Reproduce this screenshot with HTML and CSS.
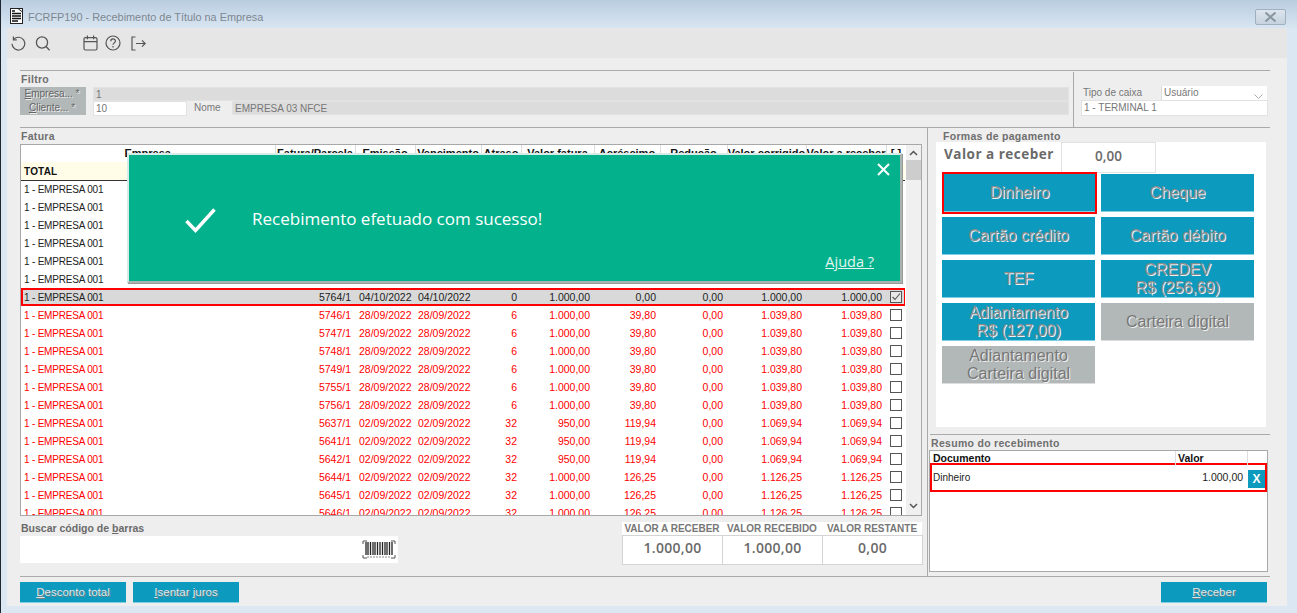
FILE: index.html
```html
<!DOCTYPE html>
<html lang="pt-BR">
<head>
<meta charset="utf-8">
<title>FCRFP190 - Recebimento de Título na Empresa</title>
<link rel="stylesheet" href="styles.css">
</head>
<body>
<div class="window">
  <header class="titlebar">
    <svg class="doc-icon" width="13" height="16" viewBox="0 0 13 16"><rect x=".5" y=".5" width="12" height="15" fill="#fff" stroke="#222"/><path d="M2 3h3M2 5.5h9M2 8h9M2 10.5h9M2 13h6" stroke="#111" stroke-width="1.4"/><path d="M8 .5l4.5 3.5" stroke="#222"/></svg>
    <span class="title-text">FCRFP190 - Recebimento de Título na Empresa</span>
    <button class="win-close"><svg width="13" height="10" viewBox="0 0 13 10"><path d="M1.500 .5l10 9M11.500 .5l-10 9" stroke="#87959f" stroke-width="2" fill="none"/></svg></button>
  </header>
  <div class="client">
    <nav class="toolbar">
      <svg class="tool" width="17" height="17" viewBox="0 0 17 17" fill="none" stroke="#555" stroke-width="1.2"><path d="M3.6 4.4A6.4 6.4 0 1 1 2 8.8"/><path d="M3.4 1.4v3.4h3.4"/></svg>
      <svg class="tool tool-search" width="16" height="17" viewBox="0 0 16 17" fill="none" stroke="#555" stroke-width="1.3"><circle cx="7" cy="7.5" r="5.6"/><path d="M11 11.5l3.6 3.8"/></svg>
      <svg class="tool tool-cal" width="15" height="16" viewBox="0 0 15 16" fill="none" stroke="#555" stroke-width="1.2"><rect x="1" y="2.6" width="13" height="12.4" rx="1.5"/><path d="M1 6.6h13M4.4 .6v3.6M10.6 .6v3.6"/></svg>
      <svg class="tool tool-help" width="16" height="16" viewBox="0 0 16 16" fill="none" stroke="#555" stroke-width="1.2"><circle cx="8" cy="8" r="7"/><path d="M5.8 6.2c0-3 4.6-3 4.6-.1 0 1.800-2.400 1.800-2.400 3.700M8 11v1.400"/></svg>
      <svg class="tool tool-exit" width="15" height="15" viewBox="0 0 15 15" fill="none" stroke="#555" stroke-width="1.2"><path d="M4.500 1H1v13h3.500M5 7.500h9M11 4.400l3.200 3.100-3.200 3.100"/></svg>
    </nav>
    <main class="content">
      <section class="filter">
        <div class="filter-left">
          <div class="legend">Filtro</div>
          <div class="f-row">
            <span class="f-label"><u>E</u>mpresa... *</span>
            <span class="f-input f-disabled f-grow">1</span>
          </div>
          <div class="f-row">
            <span class="f-label"><u>C</u>liente... *</span>
            <span class="f-input f-client">10</span>
            <span class="f-caption">Nome</span>
            <span class="f-input f-disabled f-grow">EMPRESA 03 NFCE</span>
          </div>
        </div>
        <div class="filter-right">
          <div class="caixa-row">
            <span class="caixa-label">Tipo de caixa</span>
            <span class="caixa-select">Usuário
              <svg width="9" height="5" viewBox="0 0 9 5"><path d="M.5.500l4 4 4-4" fill="none" stroke="#aaa"/></svg>
            </span>
          </div>
          <div class="caixa-field">1 - TERMINAL 1</div>
        </div>
      </section>
      <section class="body">
        <div class="left">
          <div class="legend legend-fatura">Fatura</div>
          <div class="grid-frame">
            <div class="grid-clip">
              <table class="grid">
                <colgroup>
                  <col class="c-emp"><col class="c-fat"><col class="c-emi"><col class="c-ven"><col class="c-atr"><col class="c-vf"><col class="c-acr"><col class="c-red"><col class="c-cor"><col class="c-rec"><col class="c-chk">
                </colgroup>
                <thead>
                  <tr><th class="h-emp">Empresa</th><th>Fatura/Parcela</th><th>Emissão</th><th>Vencimento</th><th>Atraso</th><th>Valor fatura</th><th>Acréscimo</th><th>Redução</th><th>Valor corrigido</th><th>Valor a receber</th><th>[ ]</th></tr>
                </thead>
                <tbody>
                  <tr class="total"><td colspan="11">TOTAL</td></tr>
                  <tr><td colspan="11">1 - EMPRESA 001</td></tr>
                  <tr><td colspan="11">1 - EMPRESA 001</td></tr>
                  <tr><td colspan="11">1 - EMPRESA 001</td></tr>
                  <tr><td colspan="11">1 - EMPRESA 001</td></tr>
                  <tr><td colspan="11">1 - EMPRESA 001</td></tr>
                  <tr><td colspan="11">1 - EMPRESA 001</td></tr>
                  <tr class="selected"><td>1 - EMPRESA 001</td><td class="n">5764/1</td><td class="d">04/10/2022</td><td class="d">04/10/2022</td><td class="n">0</td><td class="n">1.000,00</td><td class="n">0,00</td><td class="n">0,00</td><td class="n">1.000,00</td><td class="n">1.000,00</td><td class="k"><span class="box"><svg width="10" height="10" viewBox="0 0 10 10"><path d="M1.500 5l2.500 2.500L9 1.500" fill="none" stroke="#555" stroke-width="1.100"/></svg></span></td></tr>
                  <tr class="late"><td>1 - EMPRESA 001</td><td class="n">5746/1</td><td class="d">28/09/2022</td><td class="d">28/09/2022</td><td class="n">6</td><td class="n">1.000,00</td><td class="n">39,80</td><td class="n">0,00</td><td class="n">1.039,80</td><td class="n">1.039,80</td><td class="k"><span class="box"></span></td></tr>
                  <tr class="late"><td>1 - EMPRESA 001</td><td class="n">5747/1</td><td class="d">28/09/2022</td><td class="d">28/09/2022</td><td class="n">6</td><td class="n">1.000,00</td><td class="n">39,80</td><td class="n">0,00</td><td class="n">1.039,80</td><td class="n">1.039,80</td><td class="k"><span class="box"></span></td></tr>
                  <tr class="late"><td>1 - EMPRESA 001</td><td class="n">5748/1</td><td class="d">28/09/2022</td><td class="d">28/09/2022</td><td class="n">6</td><td class="n">1.000,00</td><td class="n">39,80</td><td class="n">0,00</td><td class="n">1.039,80</td><td class="n">1.039,80</td><td class="k"><span class="box"></span></td></tr>
                  <tr class="late"><td>1 - EMPRESA 001</td><td class="n">5749/1</td><td class="d">28/09/2022</td><td class="d">28/09/2022</td><td class="n">6</td><td class="n">1.000,00</td><td class="n">39,80</td><td class="n">0,00</td><td class="n">1.039,80</td><td class="n">1.039,80</td><td class="k"><span class="box"></span></td></tr>
                  <tr class="late"><td>1 - EMPRESA 001</td><td class="n">5755/1</td><td class="d">28/09/2022</td><td class="d">28/09/2022</td><td class="n">6</td><td class="n">1.000,00</td><td class="n">39,80</td><td class="n">0,00</td><td class="n">1.039,80</td><td class="n">1.039,80</td><td class="k"><span class="box"></span></td></tr>
                  <tr class="late"><td>1 - EMPRESA 001</td><td class="n">5756/1</td><td class="d">28/09/2022</td><td class="d">28/09/2022</td><td class="n">6</td><td class="n">1.000,00</td><td class="n">39,80</td><td class="n">0,00</td><td class="n">1.039,80</td><td class="n">1.039,80</td><td class="k"><span class="box"></span></td></tr>
                  <tr class="late"><td>1 - EMPRESA 001</td><td class="n">5637/1</td><td class="d">02/09/2022</td><td class="d">02/09/2022</td><td class="n">32</td><td class="n">950,00</td><td class="n">119,94</td><td class="n">0,00</td><td class="n">1.069,94</td><td class="n">1.069,94</td><td class="k"><span class="box"></span></td></tr>
                  <tr class="late"><td>1 - EMPRESA 001</td><td class="n">5641/1</td><td class="d">02/09/2022</td><td class="d">02/09/2022</td><td class="n">32</td><td class="n">950,00</td><td class="n">119,94</td><td class="n">0,00</td><td class="n">1.069,94</td><td class="n">1.069,94</td><td class="k"><span class="box"></span></td></tr>
                  <tr class="late"><td>1 - EMPRESA 001</td><td class="n">5642/1</td><td class="d">02/09/2022</td><td class="d">02/09/2022</td><td class="n">32</td><td class="n">950,00</td><td class="n">119,94</td><td class="n">0,00</td><td class="n">1.069,94</td><td class="n">1.069,94</td><td class="k"><span class="box"></span></td></tr>
                  <tr class="late"><td>1 - EMPRESA 001</td><td class="n">5644/1</td><td class="d">02/09/2022</td><td class="d">02/09/2022</td><td class="n">32</td><td class="n">1.000,00</td><td class="n">126,25</td><td class="n">0,00</td><td class="n">1.126,25</td><td class="n">1.126,25</td><td class="k"><span class="box"></span></td></tr>
                  <tr class="late"><td>1 - EMPRESA 001</td><td class="n">5645/1</td><td class="d">02/09/2022</td><td class="d">02/09/2022</td><td class="n">32</td><td class="n">1.000,00</td><td class="n">126,25</td><td class="n">0,00</td><td class="n">1.126,25</td><td class="n">1.126,25</td><td class="k"><span class="box"></span></td></tr>
                  <tr class="late"><td>1 - EMPRESA 001</td><td class="n">5646/1</td><td class="d">02/09/2022</td><td class="d">02/09/2022</td><td class="n">32</td><td class="n">1.000,00</td><td class="n">126,25</td><td class="n">0,00</td><td class="n">1.126,25</td><td class="n">1.126,25</td><td class="k"><span class="box"></span></td></tr>
                </tbody>
              </table>
            </div>
            <div class="scrollbar">
              <svg width="9" height="6" viewBox="0 0 9 6"><path d="M1 5l3.500-3.500L8 5" fill="none" stroke="#555" stroke-width="1.500"/></svg>
              <span class="thumb"></span>
              <svg class="arrow-down" width="9" height="6" viewBox="0 0 9 6"><path d="M1 1l3.500 3.500L8 1" fill="none" stroke="#555" stroke-width="1.500"/></svg>
            </div>
            <div class="toast">
              <button class="toast-close"><svg width="13" height="13" viewBox="0 0 13 13"><path d="M1 1l11 11M12 1L1 12" stroke="#fff" stroke-width="2" fill="none"/></svg></button>
              <div class="toast-msg">
                <svg width="31" height="25" viewBox="0 0 31 25"><path d="M1.500 13l9 9.500L29.500 1.500" fill="none" stroke="#fff" stroke-width="3.400"/></svg>
                <span class="toast-text">Recebimento efetuado com sucesso!</span>
              </div>
              <a class="toast-help">Ajuda ?</a>
            </div>
          </div>
          <div class="under-grid">
            <div class="barcode">
              <div class="legend barcode-label">Buscar código de <u>b</u>arras</div>
              <div class="barcode-field">
                <svg width="34" height="19" viewBox="0 0 34 19" fill="none"><path d="M1 4V1h4M29 1h4v3M1 15v3h4M29 18h4v-3" stroke="#555"/><path d="M4 2v13M6 2v13M8.500 2v13M11 2v13M13 2v13M15.500 2v13M18 2v13M20.500 2v13M23 2v13M25 2v13M27.500 2v13M30 2v13" stroke="#222" stroke-width="1.300"/><path d="M5 17h24" stroke="#888" stroke-dasharray="2 1"/></svg>
              </div>
            </div>
            <div class="totals">
              <div class="tot-col"><div class="tot-label">VALOR A RECEBER</div><div class="tot-value">1.000,00</div></div>
              <div class="tot-col"><div class="tot-label">VALOR RECEBIDO</div><div class="tot-value">1.000,00</div></div>
              <div class="tot-col"><div class="tot-label">VALOR RESTANTE</div><div class="tot-value">0,00</div></div>
            </div>
          </div>
        </div>
        <aside class="right">
          <div class="formas">
            <div class="legend legend-formas">Formas de pagamento</div>
            <div class="pay-panel">
              <div class="valor-row">
                <span class="valor-label">Valor a receber</span>
                <span class="valor-box">0,00</span>
              </div>
              <div class="pay-grid">
                <button class="pay pay-active">Dinheiro</button>
                <button class="pay">Cheque</button>
                <button class="pay">Cartão crédito</button>
                <button class="pay">Cartão débito</button>
                <button class="pay">TEF</button>
                <button class="pay">CREDEV<br>R$ (256,69)</button>
                <button class="pay">Adiantamento<br>R$ (127,00)</button>
                <button class="pay pay-off">Carteira digital</button>
                <button class="pay pay-off">Adiantamento<br>Carteira digital</button>
              </div>
            </div>
          </div>
          <div class="resumo">
            <div class="legend legend-resumo">Resumo do recebimento</div>
            <div class="resumo-box">
              <div class="resumo-head"><span class="rh-doc">Documento</span><span class="rh-val">Valor</span><span class="rh-x"></span></div>
              <div class="resumo-row">
                <span class="rr-doc">Dinheiro</span>
                <span class="rr-val">1.000,00</span>
                <button class="rr-x">X</button>
              </div>
            </div>
          </div>
        </aside>
      </section>
      <footer class="footer">
        <button class="act"><u>D</u>esconto total</button>
        <button class="act"><u>I</u>sentar juros</button>
        <button class="act act-end"><u>R</u>eceber</button>
      </footer>
    </main>
  </div>
</div>
</body>
</html>
```
FILE: styles.css
```css
* { box-sizing: border-box; }
html, body { margin: 0; padding: 0; height: 100%; overflow: hidden; }
body { font-family: "Liberation Sans", Arial, sans-serif; font-size: 10.5px; color: #222; }
button { font-family: inherit; border: 0; padding: 0; }

.window {
  width: 1297px; height: 613px;
  display: flex; flex-direction: column;
  padding: 0 10px 7px 6px;
  background: linear-gradient(#b9cde0 0, #dbe7f3 30px, #dbe7f3 100%);
  border-left: 1px solid #1e2630;
}
.titlebar { height: 28px; flex: none; display: flex; align-items: center; padding-left: 3px; }
.doc-icon { margin-right: 5px; margin-top: 4px; }
.title-text { font-size: 10.9px; color: #7d8790; margin-top: 5px; }
.win-close {
  margin-left: auto; width: 31px; height: 16px; margin-top: 6px; margin-right: 1px;
  background: linear-gradient(#dde5ed, #c6d2de);
  border: 1px solid #9fb0bf; border-radius: 2px;
  display: flex; align-items: center; justify-content: center;
}

.client { flex: 1; display: flex; flex-direction: column; background: #eeeeee; min-height: 0; }
.toolbar { height: 30px; flex: none; background: #e6e6e6; display: flex; align-items: center; padding-left: 3px; }
.tool-search { margin-left: 8px; }
.tool-cal { margin-left: 32px; }
.tool-help { margin-left: 7px; }
.tool-exit { margin-left: 10px; }

.content { flex: 1; display: flex; flex-direction: column; padding: 12px 17px 0 13px; min-height: 0; }
.legend { font-weight: 700; font-size: 10.5px; color: #6f6f6f; letter-spacing: .3px; line-height: 16px; height: 16px; }

.filter { height: 57px; flex: none; display: flex; border-top: 1px solid #aaa; padding-top: 1px; }
.filter-left { width: 1053px; padding: 0 4px 0 1px; }
.filter-left .legend { height: 15px; line-height: 14px; }
.f-row { display: flex; height: 14px; margin-left: -1px; align-items: stretch; }
.f-label { width: 66px; margin-right: 7px; background: #b2b8b8; color: #666; font-size: 10px; text-align: center; padding-right: 2px; line-height: 13px; white-space: nowrap; text-shadow: 1px 1px 0 #eee; }
.f-input { font-size: 10px; line-height: 14px; padding-left: 2px; color: #777; border: 1px solid #e2e2e2; }
.f-disabled { background: #dcdcdc; }
.f-grow { flex: 1; }
.f-client { width: 94px; background: #fff; height: 15px; }
.f-caption { width: 45px; padding-left: 7px; color: #777; font-size: 10px; line-height: 14px; }
.filter-right { flex: 1; border-left: 1px solid #aaa; padding: 14px 2px 0 7px; }
.caixa-row { display: flex; height: 14px; align-items: stretch; }
.caixa-label { width: 80px; padding-left: 2px; font-size: 10px; color: #777; line-height: 14px; }
.caixa-select { flex: 1; background: #fff; color: #777; font-size: 10px; line-height: 14px; padding-left: 2px; display: flex; justify-content: space-between; border-left: 1px solid #ddd; align-items: flex-start; margin-right: 1px; }
.caixa-select svg { margin: 8px 4px 0 0; }
.caixa-field { height: 16px; background: #fff; border: 1px solid #e2e2e2; font-size: 10px; line-height: 14px; padding-left: 2px; color: #777; }

.body { height: 449px; flex: none; display: flex; border-top: 1px solid #aaa; }
.left { width: 902px; flex: none; display: flex; flex-direction: column; }
.legend-fatura { padding-left: 1px; }

.grid-frame { position: relative; height: 372px; flex: none; border: 1px solid #a8a8a8; display: flex; background: #fff; }
.grid-clip { width: 885px; overflow: hidden; }
.grid { border-collapse: collapse; table-layout: fixed; width: 885px; }
.c-emp { width: 254px; } .c-fat { width: 80px; } .c-emi { width: 60px; } .c-ven { width: 66px; }
.c-atr { width: 40px; } .c-vf { width: 73px; } .c-acr { width: 66px; } .c-red { width: 67px; }
.c-cor { width: 79px; } .c-rec { width: 80px; } .c-chk { width: 20px; }
.grid th { height: 17px; padding: 0 0 1px; font-size: 11px; font-weight: 700; color: #111; border-right: 1px solid #ddd; white-space: nowrap; overflow: hidden; text-align: center; }
.grid td { height: 18px; padding: 0 4px 0 3px; font-size: 10.5px; white-space: nowrap; color: #222; }
.grid td:first-child { font-size: 10px; letter-spacing: -.2px; }
.grid td.n { text-align: right; letter-spacing: 0; }
.grid td.d { text-align: left; padding: 0 0 0 4px; }
.grid td.d + td.d { padding-left: 3px; }
.grid td.k { padding: 0 0 0 4px; }
.grid .total td { background: #fffde8; font-weight: 700; color: #111; border-bottom: 1px solid #333; font-size: 10px; letter-spacing: .2px; padding-top: 1px; }
.selected td { background: #d9d9d9; }
.selected { outline: 2px solid #f00; outline-offset: -2px; }
.grid .late td { color: #f00; }
.box { display: block; width: 12px; height: 12px; border: 1px solid #555; background: #fff; }
.box svg { display: block; }
.selected .box { background: #e8e8e8; }

.scrollbar { width: 15px; margin-left: 1px; background: #f0f0f0; display: flex; flex-direction: column; align-items: center; padding-top: 5px; }
.thumb { width: 15px; height: 20px; margin-top: 4px; background: #cdcdcd; }
.arrow-down { margin-top: auto; margin-bottom: 6px; }

.toast {
  position: absolute; left: 106px; top: 8px; width: 775px; height: 130px;
  background: #03b28c; border: 2px solid #d7ece6; border-right-color: #a9b5b1; border-bottom-color: #a9b5b1;
  box-shadow: 1px 1px 0 #999;
}
.toast-close { position: absolute; right: 10px; top: 8px; background: none; display: block; line-height: 0; }
.toast-msg { display: flex; align-items: flex-start; gap: 36px; padding: 53px 0 0 56px; color: #fff; font-family: "Open Sans", sans-serif; font-size: 17px; }
.toast-text { margin-top: -3px; line-height: 28px; }
.toast-help { position: absolute; right: 26px; bottom: 10px; color: #e2f5ef; font-family: "Open Sans", sans-serif; font-size: 14.5px; text-decoration: underline; }

.under-grid { flex: 1; display: flex; justify-content: space-between; padding-top: 6px; }
.barcode { width: 378px; }
.barcode-label { margin: -1px 0 0 1px; height: 15px; line-height: 15px; color: #6a6a6a; letter-spacing: 0; }
.barcode-field { height: 27px; background: #fff; display: flex; justify-content: flex-end; align-items: center; padding-right: 2px; }
.totals { width: 300px; height: 43px; display: flex; background: #fff; }
.tot-col { flex: 1; display: flex; flex-direction: column; }
.tot-label { height: 13px; font-weight: 700; font-size: 10px; color: #777; text-align: center; white-space: nowrap; line-height: 13px; background: #fff; }
.tot-value { flex: 1; border: 1px solid #d4d4d4; margin-right: -1px; font-family: "Open Sans", sans-serif; font-weight: 600; font-size: 14px; line-height: 24px; letter-spacing: .3px; color: #6a6a6a; text-align: center; }

.right { flex: 1; margin-left: 5px; border-left: 1px solid #aaa; padding: 0 0 4px 2px; display: flex; flex-direction: column; }
.formas { height: 307px; flex: none; padding: 0 4px 0 6px; border-bottom: 1px solid #aaa; }
.legend-formas { padding-left: 7px; height: 15px; }
.pay-panel { height: 285px; background: #fff; }
.valor-row { display: flex; height: 31px; align-items: stretch; padding-left: 8px; margin-top: -1px; }
.valor-label { width: 117px; font-family: "Open Sans", sans-serif; font-weight: 700; font-size: 13.5px; color: #6a6a6a; line-height: 24px; white-space: nowrap; letter-spacing: .5px; }
.valor-box { width: 95px; border: 1px solid #e2e2e2; text-align: center; font-family: "Open Sans", sans-serif; font-weight: 600; font-size: 13.5px; line-height: 27px; color: #6a6a6a; }
.pay-grid { display: grid; grid-template-columns: 153px 153px; grid-auto-rows: 38px; gap: 5px 6px; padding-left: 6px; margin-top: 1px; }
.pay { background: #0c9abf; border-bottom: 1px solid #7fcfe2; color: #8b8b8b; font-size: 16px; line-height: 18px; text-shadow: 1px 1px 0 #f0f0f0; padding: 0; white-space: nowrap; }
.pay-active { outline: 2px solid #f00; margin-left: 2px; }
.pay-off { background: #b2b8b8; border-bottom-color: #ddd; color: #777; text-shadow: 1px 1px 0 #eee; }

.resumo { flex: 1; display: flex; flex-direction: column; }
.legend-resumo { padding-left: 1px; height: 15px; line-height: 17px; }
.resumo-box { flex: 1; margin: 0 2px 0 -1px; border: 1px solid #a8a8a8; background: #fff; }
.resumo-head { display: flex; height: 14px; font-weight: 700; font-size: 10.5px; color: #111; line-height: 14px; }
.rh-doc { width: 246px; padding-left: 3px; border-right: 1px solid #ddd; }
.rh-val { width: 72px; padding-left: 2px; border-right: 1px solid #ddd; }
.rh-x { flex: 1; }
.resumo-row { display: flex; align-items: center; height: 29px; margin-top: -2px; border: 2px solid #f00; width: 337px; }
.rr-doc { width: 248px; padding-left: 1px; font-size: 10px; margin-top: -1px; }
.rr-val { width: 64px; text-align: right; font-size: 10.5px; margin-top: -1px; }
.rr-x { margin-left: 5px; margin-top: 3px; width: 17px; height: 18px; background: #0c9abf; color: #fff; font-weight: 700; font-size: 12px; }

.footer { height: 30px; flex: none; display: flex; gap: 7px; padding-top: 5px; border-top: 1px solid #aaa; }
.act { width: 106px; height: 21px; background: #0c9abf; border-bottom: 1px solid #7fcfe2; color: #dfe8ea; font-size: 11.5px; text-shadow: 1px 1px 0 #6f7f85; }
.act-end { margin-left: auto; margin-right: 3px; }
```
